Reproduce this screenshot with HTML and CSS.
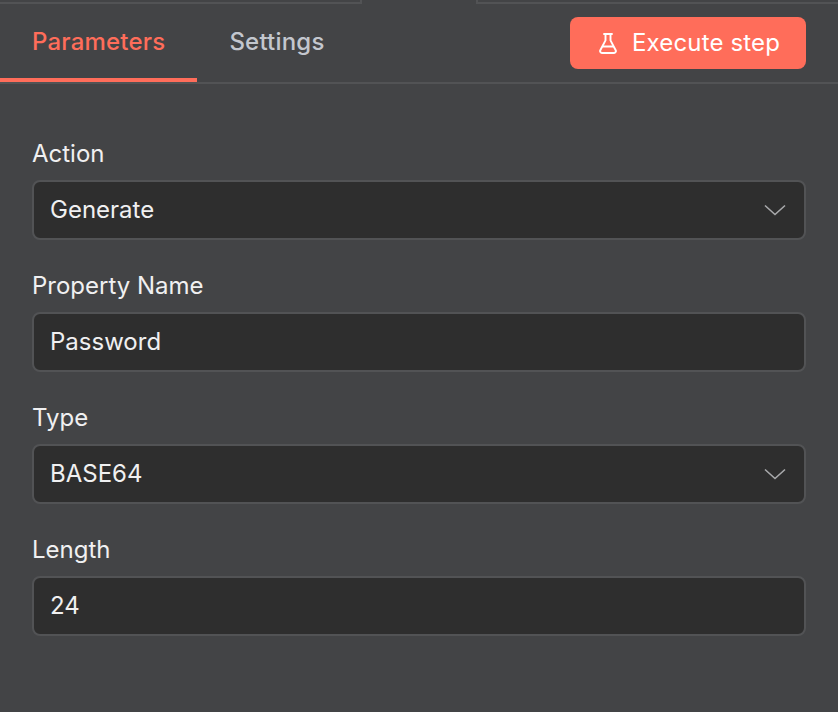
FILE: index.html
```html
<!DOCTYPE html>
<html lang="en">
<head>
    <meta charset="UTF-8">
    <meta name="viewport" content="width=device-width, initial-scale=1.0">
    <title>Node Parameters</title>
    <link rel="stylesheet" href="styles.css">
</head>
<body>
    <div class="top-strip">
        <div class="top-line top-line-left"></div>
        <div class="top-notch"></div>
        <div class="top-line"></div>
    </div>
    <div class="header">
        <div class="tabs">
            <a class="tab active" href="#">Parameters</a>
            <a class="tab" href="#">Settings</a>
        </div>
        <button class="execute-btn">
            <svg class="flask" viewBox="0 0 18 21" fill="none" stroke="currentColor" stroke-width="1.9" stroke-linecap="round" stroke-linejoin="round">
                <path d="M5 1h8"/>
                <path d="M6.5 1v6.4L1.3 17.2A1.9 1.9 0 0 0 3 20h12a1.9 1.9 0 0 0 1.7-2.8L11.5 7.4V1"/>
                <path d="M4 13.5h10"/>
            </svg>
            <span class="execute-label">Execute step</span>
        </button>
    </div>
    <div class="form">
        <div class="field">
            <label>Action</label>
            <div class="input">
                <span>Generate</span>
                <svg class="chevron" viewBox="0 0 22 12" fill="none" stroke="currentColor" stroke-width="1.6"><path d="M1 1.5l10 9 10-9"/></svg>
            </div>
        </div>
        <div class="field">
            <label>Property Name</label>
            <div class="input"><span>Password</span></div>
        </div>
        <div class="field">
            <label>Type</label>
            <div class="input">
                <span>BASE64</span>
                <svg class="chevron" viewBox="0 0 22 12" fill="none" stroke="currentColor" stroke-width="1.6"><path d="M1 1.5l10 9 10-9"/></svg>
            </div>
        </div>
        <div class="field">
            <label>Length</label>
            <div class="input"><span>24</span></div>
        </div>
    </div>
</body>
</html>
```

FILE: styles.css
```css
html, body {
    height: 100%;
}
body {
    background-color: #434446;
    color: #f0f0f1;
    font-family: Inter, "Noto Sans", sans-serif;
    margin: 0;
    overflow: hidden;
}
.top-strip {
    display: flex;
    height: 4px;
}
.top-line {
    flex: 1;
    margin-top: 2px;
    background-color: #525355;
}
.top-line-left {
    flex: none;
    width: 360px;
}
.top-notch {
    width: 114px;
    border-left: 2px solid #525355;
    border-right: 2px solid #525355;
}
.header {
    display: flex;
    justify-content: space-between;
    height: 78px;
    padding-right: 32px;
    border-bottom: 2px solid #525355;
}
.tabs {
    display: flex;
}
.tab {
    height: 74px;
    line-height: 76px;
    font-size: 24px;
    font-weight: 500;
    letter-spacing: 0.2px;
    color: #c3c7ce;
    text-decoration: none;
    padding: 0 32px;
}
.tab.active {
    color: #ff6d5a;
    border-bottom: 4px solid #ff6d5a;
}
.execute-btn {
    display: flex;
    align-items: center;
    gap: 15px;
    box-sizing: border-box;
    width: 236px;
    height: 52px;
    margin-top: 13px;
    padding: 0 0 0 29px;
    font-family: inherit;
    font-size: 24px;
    font-weight: 400;
    letter-spacing: 0.15px;
    color: white;
    background-color: #ff6d5a;
    border: none;
    border-radius: 8px;
}
.execute-label {
    margin-top: -2px;
}
.flask {
    width: 18px;
    height: 21px;
}
.form {
    display: flex;
    flex-direction: column;
    gap: 28px;
    padding: 52px 32px 0;
}
.field label {
    display: block;
    height: 44px;
    line-height: 36px;
    font-size: 24px;
}
.input {
    display: flex;
    align-items: center;
    justify-content: space-between;
    box-sizing: border-box;
    height: 60px;
    padding: 0 18px 2px 16px;
    font-size: 24px;
    background-color: #2e2e2e;
    border: 2px solid #525355;
    border-radius: 8px;
}
.chevron {
    width: 22px;
    height: 12px;
    margin-top: 2px;
    color: #a8a9ab;
}
```
